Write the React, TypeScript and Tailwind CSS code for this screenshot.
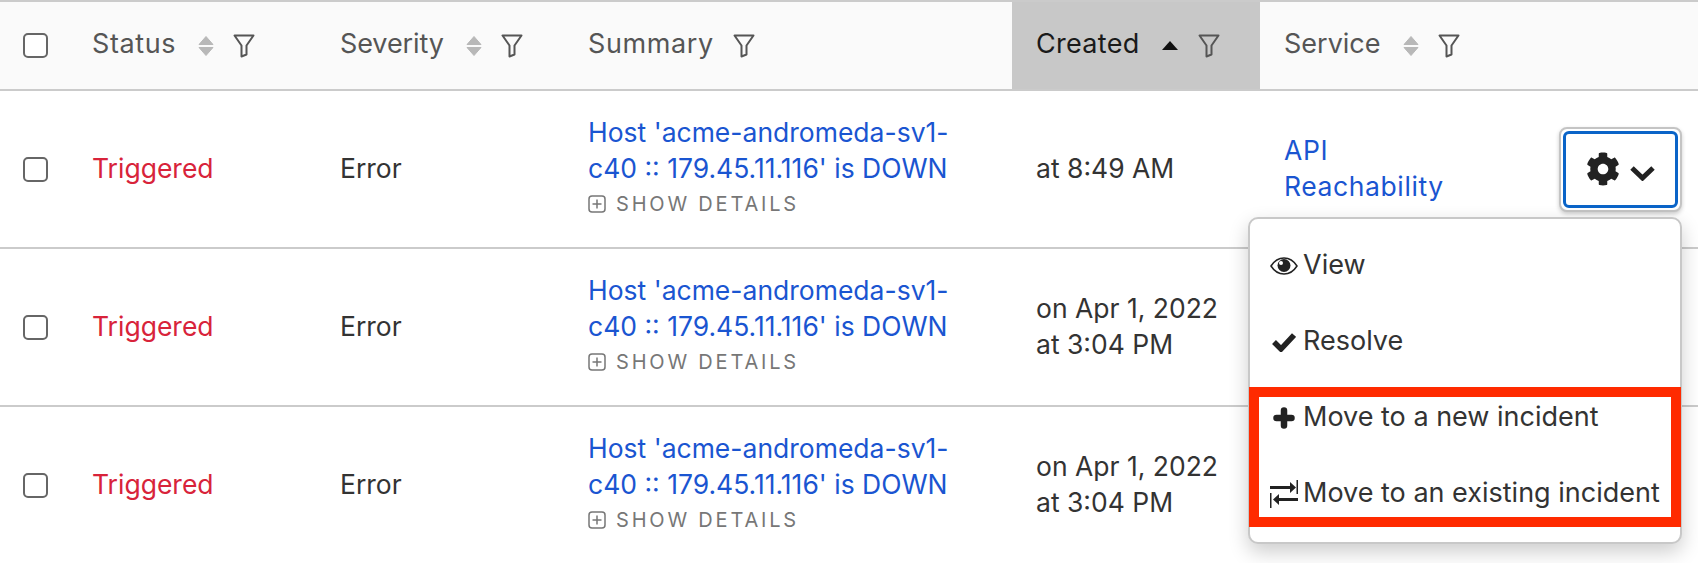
import { FaCog } from 'react-icons/fa'

function FilterIcon() {
  return (
    <svg viewBox="0 0 22 24" className="h-6 w-[22px] shrink-0" fill="none" stroke="#555" strokeWidth="2" strokeLinejoin="round">
      <path d="M1.5 1.500h19L13.500 11.500V20.500L8.500 22.500V11.500Z" />
    </svg>
  )
}

function SortIcon() {
  return (
    <svg viewBox="0 0 16 20" className="h-5 w-4 shrink-0" fill="#b8b8b8" stroke="#b8b8b8" strokeLinejoin="round">
      <path d="M8 .5l7 8H1Z" />
      <path d="M8 19.500l7-8H1Z" />
    </svg>
  )
}

function Checkbox() {
  return <span className="block h-[25px] w-[25px] rounded-[5px] border-2 border-[#666] bg-white" />
}

function HeaderCell({ label, sortable = true, labelClass = 'tracking-[0.6px]' }: { label: string; sortable?: boolean; labelClass?: string }) {
  return (
    <div className="flex items-center px-6">
      <span className={`mb-[4px] ${labelClass}`}>{label}</span>
      {sortable && (
        <span className="ml-[22px]">
          <SortIcon />
        </span>
      )}
      <span className="ml-[19px]">
        <FilterIcon />
      </span>
    </div>
  )
}

function Row({ created, service }: { created: string[]; service?: boolean }) {
  return (
    <div className="grid h-[158px] grid-cols-[68px_248px_248px_448px_248px_438px] items-center border-b-2 border-[#cbcbcb] last:border-b-0">
      <div className="pl-[23px]">
        <Checkbox />
      </div>
      <div className="px-6 pb-[2px] text-[#d8233a]">Triggered</div>
      <div className="px-6 pb-[2px]">Error</div>
      <div className="px-6 pb-[2px]">
        <a className="block w-[390px] text-[#1a55d1]">Host 'acme-andromeda-sv1-c40 :: 179.45.11.116' is DOWN</a>
        <div className="flex items-center gap-[10px] text-[20px] tracking-[2.8px] text-[#777]">
          <svg viewBox="0 0 18 18" className="h-[18px] w-[18px]" fill="none" stroke="#777" strokeWidth="1.5">
            <rect x="1" y="1" width="16" height="16" rx="3" />
            <path d="M9 4.500v9M4.500 9h9" />
          </svg>
          SHOW DETAILS
        </div>
      </div>
      <div className="px-6 pb-[2px]">
        {created.map((line) => (
          <div key={line}>{line}</div>
        ))}
      </div>
      <div className="flex items-center justify-between pl-6 pr-4">
        {service && (
          <>
            <a className="w-[170px] pb-[2px] tracking-[0.6px] text-[#1a55d1]">API Reachability</a>
            <button className="flex h-[85px] w-[123px] items-center justify-center rounded-[8px] border-2 border-[#c4c4c4] bg-white p-0 shadow-[0_2px_4px_rgba(0,0,0,0.2)]">
              <span className="flex h-[77px] w-[115px] items-center justify-center gap-[10px] rounded-[6px] border-[3px] border-[#0a64c8] text-[#222]">
                <FaCog className="h-[34px] w-[34px]" />
                <svg viewBox="0 0 25 16" className="mt-[8px] h-4 w-[25px]" fill="none" stroke="#222" strokeWidth="5">
                  <path d="M2 3l10.500 10L23 3" />
                </svg>
              </span>
            </button>
          </>
        )}
      </div>
    </div>
  )
}

function MenuItem({ icon, label }: { icon: React.ReactNode; label: string }) {
  return (
    <div className="flex h-[76px] items-center pl-[20px]">
      <span className="flex w-[33px] shrink-0 items-center justify-start">{icon}</span>
      <span className="pb-[3px]">{label}</span>
    </div>
  )
}

function EyeIcon() {
  return (
    <svg viewBox="0 0 28 18" className="h-[18px] w-7" fill="#222">
      <path d="M1 9C4.500 3.500 9 1 14 1s9.500 2.500 13 8c-3.500 5.500-8 8-13 8S4.500 14.500 1 9Z" fill="none" stroke="#222" strokeWidth="1.500" />
      <circle cx="14" cy="8.500" r="6.500" />
      <circle cx="11" cy="6" r="2" fill="#fff" />
    </svg>
  )
}

function CheckIcon() {
  return (
    <svg viewBox="0 0 24 20" className="ml-[2px] h-5 w-6" fill="none" stroke="#222" strokeWidth="5.500">
      <path d="M2 10l7 7L22 3" />
    </svg>
  )
}

function PlusIcon() {
  return (
    <svg viewBox="0 0 22 22" className="ml-[3px] h-[22px] w-[22px]" fill="none" stroke="#222" strokeWidth="6.500" strokeLinecap="round">
      <path d="M11 3.500v15M3.500 11h15" />
    </svg>
  )
}

function ExchangeIcon() {
  return (
    <svg viewBox="0 0 28 28" className="h-7 w-7" fill="#222">
      <path d="M0 6h20V2l6 5.500-6 5.500V9H0Z" />
      <path d="M26.500 0h1.500v14h-1.500Z" />
      <path d="M28 18H9v-4l-6 5.500L9 25v-4h19Z" />
      <path d="M0 13h1.500v15H0Z" />
    </svg>
  )
}

export default function App() {
  return (
    <div className="relative h-[563px] w-[1698px] overflow-hidden bg-white font-['Inter',sans-serif] text-[26.5px] leading-[36px] text-[#333]">
      <div className="grid h-[91px] grid-cols-[68px_248px_248px_448px_248px_438px] items-stretch border-y-2 border-[#cbcbcb] bg-[#fafafa] text-[27px] text-[#555]">
        <div className="flex items-center pl-[23px]">
          <Checkbox />
        </div>
        <HeaderCell label="Status" />
        <HeaderCell label="Severity" labelClass="tracking-[-0.1px]" />
        <HeaderCell label="Summary" sortable={false} />
        <div className="flex items-center bg-[#c8c8c8] px-6 text-[#1a1a1a]">
          <span className="mb-[4px] tracking-[0.3px]">Created</span>
          <svg viewBox="0 0 16 9" className="ml-[22px] h-[9px] w-4" fill="#111">
            <path d="M8 0l8 9H0Z" />
          </svg>
          <span className="ml-[20px]">
            <FilterIcon />
          </span>
        </div>
        <HeaderCell label="Service" labelClass="tracking-[0px]" />
      </div>

      <Row created={['at 8:49 AM']} service />
      <Row created={['on Apr 1, 2022', 'at 3:04 PM']} />
      <Row created={['on Apr 1, 2022', 'at 3:04 PM']} />

      <div className="absolute left-[1248px] top-[217px] h-[327px] w-[434px] rounded-[10px] border-2 border-[#c8c8c8] bg-white pt-[9px] text-[27px] shadow-[0_8px_20px_rgba(0,0,0,0.2)]">
        <MenuItem icon={<EyeIcon />} label="View" />
        <MenuItem icon={<CheckIcon />} label="Resolve" />
        <MenuItem icon={<PlusIcon />} label="Move to a new incident" />
        <MenuItem icon={<ExchangeIcon />} label="Move to an existing incident" />
        {/* red annotation from the original screenshot */}
        <div className="absolute inset-x-[-1px] top-[168px] h-[140px] border-[10px] border-[#ff2a00]" />
      </div>
    </div>
  )
}
